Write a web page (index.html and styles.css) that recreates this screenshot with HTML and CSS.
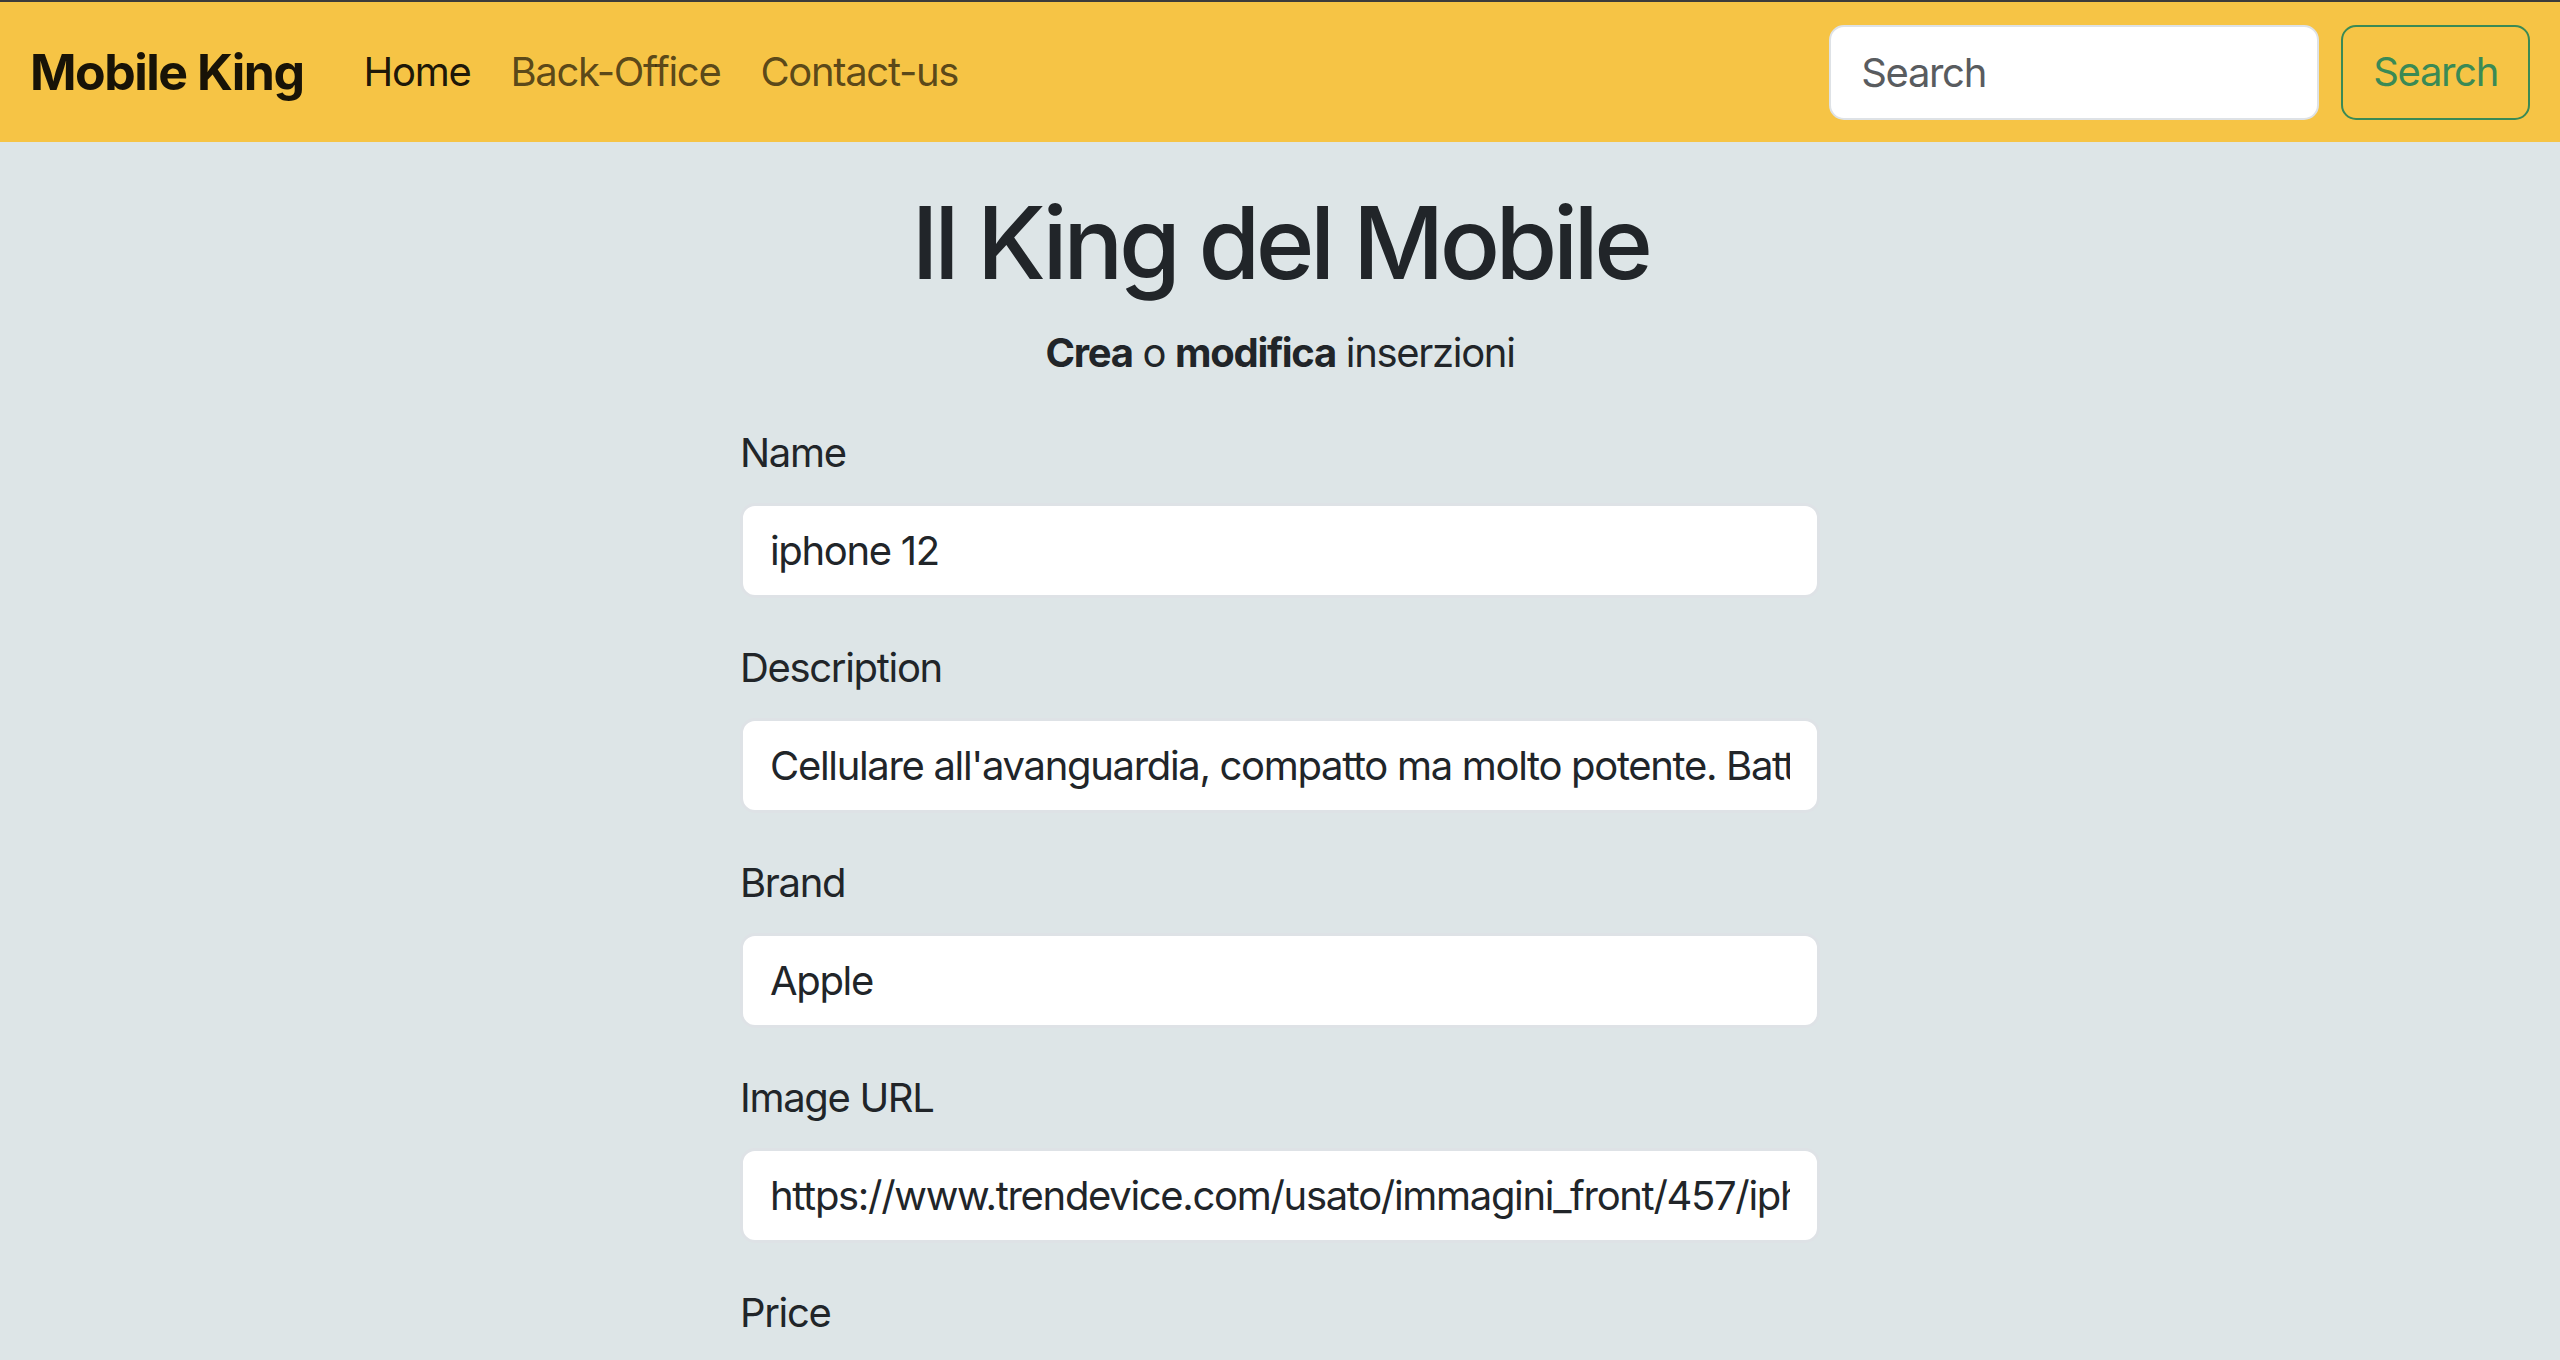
FILE: index.html
```html
<!DOCTYPE html>
<html lang="it">
<head>
<meta charset="utf-8">
<title>Mobile King - Back-Office</title>
<link rel="stylesheet" href="styles.css">
</head>
<body>
<nav class="navbar">
  <a class="brand" href="#">Mobile King</a>
  <ul class="nav-links">
    <li><a class="nav-link active" href="#">Home</a></li>
    <li><a class="nav-link" href="#">Back-Office</a></li>
    <li><a class="nav-link" href="#">Contact-us</a></li>
  </ul>
  <form class="nav-search">
    <input class="search-input" type="search" placeholder="Search" aria-label="Search">
    <button class="btn-search" type="button">Search</button>
  </form>
</nav>
<main class="page">
  <h1 class="title">Il King del Mobile</h1>
  <p class="subtitle"><strong>Crea</strong> o <strong>modifica</strong> inserzioni</p>
  <form class="listing-form">
    <div class="field">
      <label class="field-label" for="name">Name</label>
      <input class="field-input" id="name" type="text" value="iphone 12">
    </div>
    <div class="field">
      <label class="field-label" for="description">Description</label>
      <input class="field-input" id="description" type="text" value="Cellulare all'avanguardia, compatto ma molto potente. Batteria a lunga durata.">
    </div>
    <div class="field">
      <label class="field-label" for="brand">Brand</label>
      <input class="field-input" id="brand" type="text" value="Apple">
    </div>
    <div class="field">
      <label class="field-label" for="image">Image URL</label>
      <input class="field-input" id="image" type="text" value="https://www.trendevice.com/usato/immagini_front/457/iphone-12-blu.png">
    </div>
    <div class="field">
      <label class="field-label" for="price">Price</label>
      <input class="field-input" id="price" type="number" value="699">
    </div>
  </form>
</main>
</body>
</html>
```
FILE: styles.css
```css
html {
  scrollbar-width: none;
}
html::-webkit-scrollbar {
  display: none;
}
body {
  margin: 0;
  border-top: 2px solid #3b3b3b;
  background: #dde5e7;
  color: #212529;
  font-family: Inter, "Noto Sans", "Liberation Sans", sans-serif;
  font-size: 40px;
  line-height: 1.5;
  letter-spacing: -0.033em;
}

/* Navbar */
.navbar {
  display: flex;
  align-items: center;
  height: 140px;
  box-sizing: border-box;
  padding: 20px 30px;
  background: #f6c445;
}
.brand {
  font-size: 50px;
  line-height: 75px;
  padding: 12.5px 0;
  margin-right: 40px;
  font-weight: 700;
  color: rgba(0, 0, 0, 0.9);
  text-decoration: none;
  letter-spacing: -0.03em;
}
.nav-links {
  display: flex;
  list-style: none;
  margin: 0;
  padding: 0;
}
.nav-link {
  display: block;
  padding: 20px 20px;
  line-height: 60px;
  color: rgba(0, 0, 0, 0.65);
  text-decoration: none;
}
.nav-link.active {
  color: rgba(0, 0, 0, 0.9);
}
.nav-search {
  display: flex;
  gap: 22px;
  margin-left: auto;
}
.search-input {
  width: 490px;
  height: 95px;
  box-sizing: border-box;
  padding: 15px 30px;
  border: 2px solid #dee2e6;
  border-radius: 15px;
  background: #fff;
  font-family: inherit;
  font-size: 40px;
  letter-spacing: inherit;
  color: #212529;
  outline: none;
}
.search-input::placeholder {
  color: #595c5f;
}
.btn-search {
  height: 95px;
  box-sizing: border-box;
  padding: 15px 30px;
  border: 2px solid #3a8a55;
  border-radius: 15px;
  background: transparent;
  color: #3a8a55;
  font-family: inherit;
  font-size: 40px;
  letter-spacing: inherit;
  line-height: 60px;
}

/* Page */
.page {
  padding-top: 41px;
}
.title {
  margin: 0 0 20px;
  text-align: center;
  font-size: 100px;
  font-weight: 500;
  line-height: 1.2;
  letter-spacing: -0.045em;
}
.subtitle {
  margin: 0 0 40px;
  text-align: center;
  line-height: 60px;
}
.subtitle strong {
  font-weight: 700;
}
.listing-form {
  width: 1080px;
  margin: 0 auto;
}
.field {
  margin-bottom: 40px;
}
.field-label {
  display: block;
  margin-bottom: 20px;
  line-height: 60px;
}
.field-input {
  display: block;
  width: 100%;
  height: 95px;
  box-sizing: border-box;
  padding: 14px 27px;
  border: 3px solid #dee2e6;
  border-radius: 15px;
  background: #fff;
  color: #212529;
  font-family: inherit;
  font-size: 40px;
  letter-spacing: inherit;
  outline: none;
}
```
